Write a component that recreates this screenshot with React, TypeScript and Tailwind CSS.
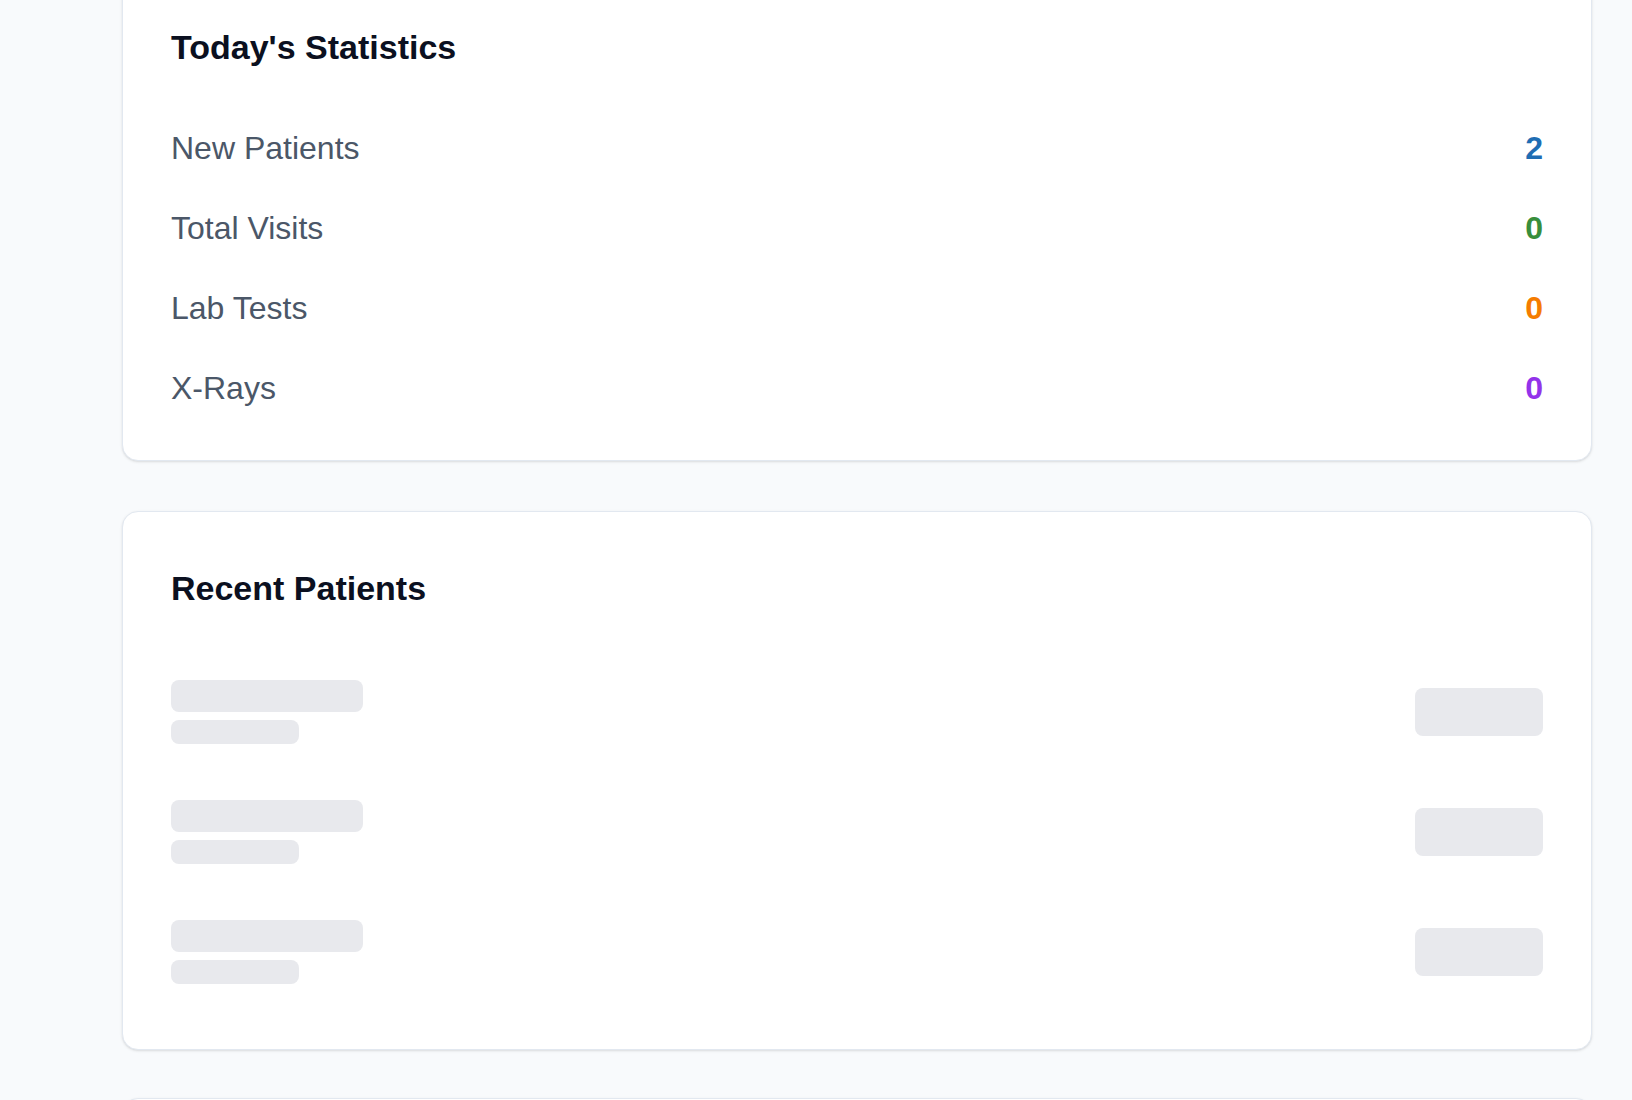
const stats = [
  { label: 'New Patients', value: 2, color: 'text-[#1f6db3]' },
  { label: 'Total Visits', value: 0, color: 'text-[#388e3c]' },
  { label: 'Lab Tests', value: 0, color: 'text-[#f57c00]' },
  { label: 'X-Rays', value: 0, color: 'text-[#9333ea]' },
];

function SkeletonRow() {
  return (
    <div className="flex h-16 items-center justify-between">
      <div className="flex flex-col gap-2">
        <div className="h-8 w-48 rounded-lg bg-[#e8e9ed]" />
        <div className="h-6 w-32 rounded-lg bg-[#e8e9ed]" />
      </div>
      <div className="h-12 w-32 rounded-lg bg-[#e8e9ed]" />
    </div>
  );
}

export default function App() {
  return (
    <main
      className="h-[1100px] overflow-hidden bg-[#f8fafc] pl-[122px] pr-[40px]"
      style={{ fontFamily: '"Liberation Sans", Arial, sans-serif' }}
    >
      <section className="mt-[-26px] rounded-2xl border border-[#e2e8f0] bg-white p-12 pb-[49px] shadow-sm">
        <h2 className="text-[34px] font-bold leading-[48px] text-[#0b1020]">Today's Statistics</h2>
        <div className="mt-[54px] flex flex-col gap-[34px]">
          {stats.map((s) => (
            <div key={s.label} className="flex h-[46px] items-center justify-between">
              <span className="text-[32px] text-[#4b5768]">{s.label}</span>
              <span className={`pb-px text-[32px] font-bold ${s.color}`}>{s.value}</span>
            </div>
          ))}
        </div>
      </section>

      <section className="mt-[50px] rounded-2xl border border-[#e2e8f0] bg-white p-12 pb-[65px] shadow-sm">
        <h2 className="pt-1 text-[34px] font-bold leading-[48px] text-[#0b1020]">Recent Patients</h2>
        <div className="mt-[68px] flex flex-col gap-14">
          <SkeletonRow />
          <SkeletonRow />
          <SkeletonRow />
        </div>
      </section>

      <section className="mt-[48px] h-40 rounded-2xl border border-[#e2e8f0] bg-white shadow-sm" />
    </main>
  );
}
